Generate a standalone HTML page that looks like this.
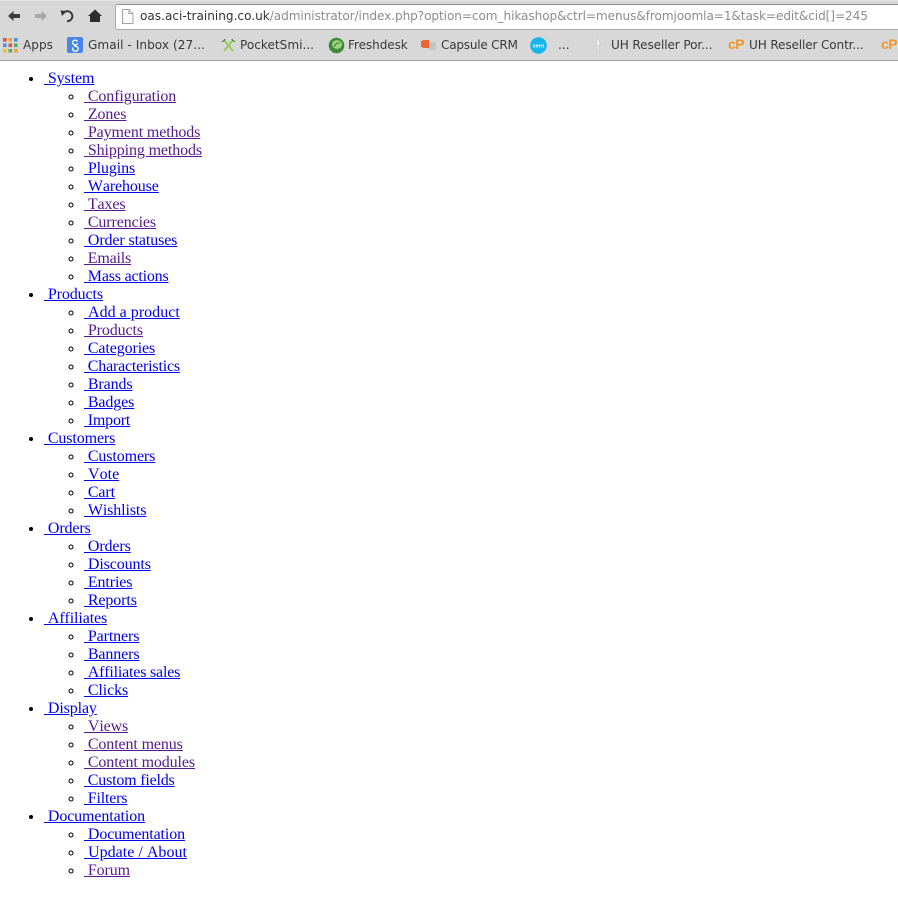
<!DOCTYPE html>
<html>
<head>
<meta charset="utf-8">
<style>
html,body{margin:0;padding:0;background:#fff;width:898px;height:902px;overflow:hidden}
#bar{position:absolute;left:0;top:0;width:898px;height:60px;background:#d8d8d8;border-bottom:1px solid #a2a2a2;box-shadow:inset 0 1px 0 #e4e4e4;overflow:hidden}
#addr{position:absolute;left:115px;top:4px;width:790px;height:24px;background:#fff;border:1px solid #a8a8a8;border-top-color:#8e8e8e;border-radius:3px}
.u{position:absolute;left:140px;top:8px;font:12.1px/17px "DejaVu Sans",sans-serif;color:#8c8c8c;white-space:nowrap;letter-spacing:-.08px}
.u b{font-weight:normal;color:#333;letter-spacing:0}
.bm{position:absolute;top:37px;font:12.1px/17px "DejaVu Sans",sans-serif;color:#3a3a3a;white-space:nowrap}
svg{position:absolute}
#m{position:absolute;left:4px;top:70px;margin:0;padding:0 0 0 40px;font:16px/18px "Liberation Serif",serif;color:#000;font-kerning:none;letter-spacing:-.12px}
#m ul{margin:0;padding:0 0 0 40px}
a{color:#0000ee;text-decoration:underline}
a.v{color:#551a8b}
a.p{letter-spacing:.02px}
a.n{letter-spacing:-.2px}
</style>
</head>
<body>
<div id="bar">
<svg style="left:7px;top:9px" width="15" height="14" viewBox="0 0 15 14"><path d="M1 7 L6.5 2 V5 H13 V9 H6.5 V12Z" fill="#3c3c3c"/></svg>
<svg style="left:32px;top:9px" width="16" height="14" viewBox="0 0 16 14"><path d="M15 7 L9.5 2 V5 H3 V9 H9.5 V12Z" fill="#a8a8a8"/></svg>
<svg style="left:59px;top:8px" width="16" height="16" viewBox="0 0 16 16"><path d="M4.5 5 A5 5 0 1 1 8 13.2" fill="none" stroke="#333" stroke-width="1.9"/><path d="M1.5 2.5 L7.5 3 L3 8Z" fill="#333"/></svg>
<svg style="left:87px;top:8px" width="16" height="16" viewBox="0 0 16 16"><path d="M8 1.5 L15 8 H13 V14 H3 V8 H1Z" fill="#2e2e2e"/></svg>
<div id="addr"></div>
<svg style="left:121px;top:9px" width="13" height="15" viewBox="0 0 13 15"><path d="M1.5 .5 H8 L12 4.5 V14.5 H1.5Z" fill="#fbfbfb" stroke="#a0a0a0"/><path d="M8 .5 V4.5 H12" fill="#e8e8e8" stroke="#a0a0a0"/></svg>
<div class="u"><b>oas.aci-training.co.uk</b>/administrator/index.php?option=com_hikashop&amp;ctrl=menus&amp;fromjoomla=1&amp;task=edit&amp;cid[]=245</div>

<svg style="left:3px;top:38px" width="15" height="15" viewBox="0 0 15 15">
<rect x="0" y="0" width="3.6" height="3.6" fill="#d9534a"/><rect x="5.5" y="0" width="3.6" height="3.6" fill="#e8a33a"/><rect x="11" y="0" width="3.6" height="3.6" fill="#4d8fe0"/>
<rect x="0" y="5.5" width="3.6" height="3.6" fill="#4d8fe0"/><rect x="5.5" y="5.5" width="3.6" height="3.6" fill="#d9534a"/><rect x="11" y="5.5" width="3.6" height="3.6" fill="#5cab62"/>
<rect x="0" y="11" width="3.6" height="3.6" fill="#e8c23a"/><rect x="5.5" y="11" width="3.6" height="3.6" fill="#5cab62"/><rect x="11" y="11" width="3.6" height="3.6" fill="#e8a33a"/></svg>
<span class="bm" style="left:23px">Apps</span>

<svg style="left:67px;top:37px" width="16" height="16" viewBox="0 0 16 16"><rect width="16" height="16" rx="2" fill="#4a86e8"/><path d="M10.5 4.5 A2.6 2.4 0 1 0 10.5 6.5 M7 8.5 L9.5 9.5 A2.8 2.5 0 1 1 6 10.5" fill="none" stroke="#fff" stroke-width="1.3"/></svg>
<span class="bm" style="left:88px;letter-spacing:.05px">Gmail - Inbox (27...</span>

<svg style="left:221px;top:38px" width="15" height="15" viewBox="0 0 15 15"><path d="M3 2 L12 13 M12 2 L3 13" stroke="#8ccc44" stroke-width="1.7" fill="none"/><path d="M1 3 Q3 4 4 1 M14 3 Q12 4 11 1" stroke="#4a8a3a" stroke-width="1.3" fill="none"/></svg>
<span class="bm" style="left:240px">PocketSmi...</span>

<svg style="left:328px;top:37px" width="17" height="17" viewBox="0 0 17 17"><circle cx="8.5" cy="8.5" r="7.8" fill="#3d8a3a"/><ellipse cx="9" cy="7.5" rx="5" ry="4.4" fill="#9ed47e"/><path d="M6 10 Q8 5 12 6" stroke="#2f7a2f" fill="none"/></svg>
<span class="bm" style="left:348px;letter-spacing:-.1px">Freshdesk</span>

<svg style="left:421px;top:39px" width="16" height="14" viewBox="0 0 16 14"><rect x="8" y="3" width="7" height="8" rx="1" fill="#c4c4c4"/><path d="M3 1 H8 V9 H3 A4 4 0 0 1 3 1Z" fill="#e8673a"/></svg>
<span class="bm" style="left:441px;letter-spacing:-.25px">Capsule CRM</span>

<svg style="left:530px;top:37px" width="17" height="17" viewBox="0 0 17 17"><circle cx="8.5" cy="8.5" r="8.3" fill="#13b5ea"/><text x="8.5" y="10.5" font-family="Liberation Sans" font-size="5.5" font-weight="bold" fill="#fff" text-anchor="middle">xero</text></svg>
<span class="bm" style="left:558px">...</span>

<svg style="left:592px;top:37px" width="12" height="16" viewBox="0 0 12 16"><path d="M6 1 L9 8 L7 8 L7 15 L5 15 L5 8 L3 8Z" fill="#ececec" stroke="#c4c4c4" stroke-width=".6"/></svg>
<span class="bm" style="left:611px;letter-spacing:-.12px">UH Reseller Por...</span>

<span style="position:absolute;left:728px;top:36px;font:bold 14px/17px 'Liberation Sans',sans-serif;color:#f0962a;letter-spacing:-.5px">cP</span>
<span class="bm" style="left:749px;letter-spacing:-.15px">UH Reseller Contr...</span>
<span style="position:absolute;left:881px;top:36px;font:bold 14px/17px 'Liberation Sans',sans-serif;color:#f0962a;letter-spacing:-.5px">cP</span>
</div>

<ul id="m">
<li><a href="#">&nbsp;System</a>
<ul>
<li><a class="v" href="#">&nbsp;Configuration</a></li>
<li><a class="v" href="#">&nbsp;Zones</a></li>
<li><a class="v" href="#">&nbsp;Payment methods</a></li>
<li><a class="v" href="#">&nbsp;Shipping methods</a></li>
<li><a href="#">&nbsp;Plugins</a></li>
<li><a href="#">&nbsp;Warehouse</a></li>
<li><a class="v" href="#">&nbsp;Taxes</a></li>
<li><a class="v" href="#">&nbsp;Currencies</a></li>
<li><a href="#">&nbsp;Order statuses</a></li>
<li><a class="v n" href="#">&nbsp;Emails</a></li>
<li><a class="n" href="#">&nbsp;Mass actions</a></li>
</ul></li>
<li><a href="#">&nbsp;Products</a>
<ul>
<li><a class="p" href="#">&nbsp;Add a product</a></li>
<li><a class="v" href="#">&nbsp;Products</a></li>
<li><a href="#">&nbsp;Categories</a></li>
<li><a class="n" href="#">&nbsp;Characteristics</a></li>
<li><a href="#">&nbsp;Brands</a></li>
<li><a href="#">&nbsp;Badges</a></li>
<li><a class="n" href="#">&nbsp;Import</a></li>
</ul></li>
<li><a href="#">&nbsp;Customers</a>
<ul>
<li><a href="#">&nbsp;Customers</a></li>
<li><a class="p" href="#">&nbsp;Vote</a></li>
<li><a href="#">&nbsp;Cart</a></li>
<li><a href="#">&nbsp;Wishlists</a></li>
</ul></li>
<li><a href="#">&nbsp;Orders</a>
<ul>
<li><a href="#">&nbsp;Orders</a></li>
<li><a href="#">&nbsp;Discounts</a></li>
<li><a href="#">&nbsp;Entries</a></li>
<li><a href="#">&nbsp;Reports</a></li>
</ul></li>
<li><a href="#">&nbsp;Affiliates</a>
<ul>
<li><a href="#">&nbsp;Partners</a></li>
<li><a href="#">&nbsp;Banners</a></li>
<li><a class="n" href="#">&nbsp;Affiliates sales</a></li>
<li><a href="#">&nbsp;Clicks</a></li>
</ul></li>
<li><a href="#">&nbsp;Display</a>
<ul>
<li><a class="v" href="#">&nbsp;Views</a></li>
<li><a class="v" href="#">&nbsp;Content menus</a></li>
<li><a class="v" href="#">&nbsp;Content modules</a></li>
<li><a class="n" href="#">&nbsp;Custom fields</a></li>
<li><a class="n" href="#">&nbsp;Filters</a></li>
</ul></li>
<li><a href="#">&nbsp;Documentation</a>
<ul>
<li><a href="#">&nbsp;Documentation</a></li>
<li><a class="p" href="#">&nbsp;Update / About</a></li>
<li><a class="v" href="#">&nbsp;Forum</a></li>
</ul></li>
</ul>
</body>
</html>
